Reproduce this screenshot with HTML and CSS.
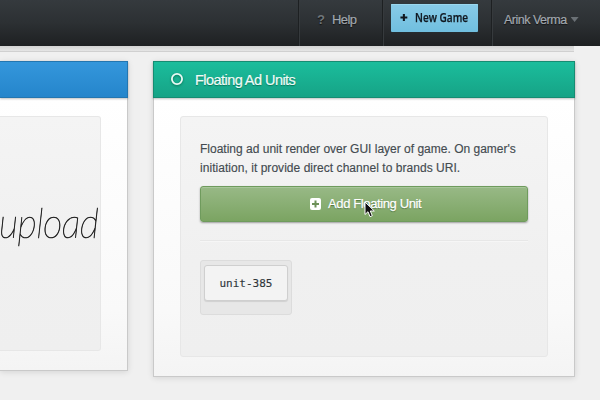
FILE: index.html
```html
<!DOCTYPE html>
<html lang="en">
<head>
<meta charset="utf-8">
<title>Game Dashboard</title>
<link rel="stylesheet" href="styles.css">
</head>
<body>
<header class="topbar">
  <nav class="nav">
    <a class="nav-item help"><span class="question">?</span><span class="help-label">Help</span></a>
    <div class="nav-item action">
      <button class="new-game">
        <svg class="plus" viewBox="0 0 9 9"><path d="M4.5 0.5v8M0.5 4.5h8"/></svg>
        <span class="new-label">New Game</span>
      </button>
    </div>
    <a class="nav-item user"><span class="user-label">Arink Verma</span><i class="caret"></i></a>
  </nav>
</header>
<div class="subline"></div>
<main class="columns">
  <section class="card card-blue">
    <div class="card-head"></div>
    <div class="card-body">
      <div class="well upload-well"><span class="upload">upload</span></div>
    </div>
  </section>
  <section class="card card-green">
    <div class="card-head">
      <svg class="ring" viewBox="0 0 14 14"><circle cx="7" cy="7" r="5.1"/></svg>
      <h2 class="title">Floating Ad Units</h2>
    </div>
    <div class="card-body">
      <div class="well">
        <p class="text"><span class="line-one">Floating ad unit render over GUI layer of game. On gamer's</span><br><span class="line-two">initiation, it provide direct channel to brands URI.</span></p>
        <button class="add">
          <svg class="add-icon" viewBox="0 0 11 12"><rect width="11" height="12" rx="2"/><path d="M5.5 2.5v7M2 6h7"/></svg>
          <span class="add-label">Add Floating Unit</span>
          <svg class="cursor" viewBox="0 0 11 17"><path d="M1 1v12.5l3-2.8 2 5 2.3-1-2-4.7H10.300z"/></svg>
        </button>
        <hr class="rule">
        <div class="unit-box"><div class="unit"><span class="unit-label">unit-385</span></div></div>
      </div>
    </div>
  </section>
</main>
</body>
</html>
```

FILE: styles.css
```css
* { box-sizing: border-box; }
body {
  margin: 0;
  width: 600px;
  height: 400px;
  overflow: hidden;
  background: #f0f0f0;
  font-family: "Liberation Sans", Arial, sans-serif;
  color: #444b50;
}
.topbar {
  height: 46px;
  background: linear-gradient(#353a3e, #2c3033 50%, #1e2022);
}
.nav { display: flex; justify-content: flex-end; height: 46px; }
.nav-item {
  display: flex;
  border-left: 1px solid #1d2022;
  box-shadow: inset 1px 0 #363a3d;
  color: #a2a9b0;
  font-size: 13px;
  line-height: 16px;
  text-shadow: 0 1px 1px #111;
}
.help { width: 84px; padding: 12px 0 0 18px; }
.question { width: 15px; color: #70767b; font-weight: bold; }
.help-label { letter-spacing: -0.6px; -webkit-text-stroke: .2px #a2a9b0; }
.action { width: 109px; padding: 4px 0 0 8px; }
.new-game {
  display: flex;
  align-items: center;
  width: 87px;
  height: 28px;
  padding: 0 0 1px 9px;
  border: 0;
  border-radius: 1px;
  background: linear-gradient(#88cbe8, #70bfdf);
  box-shadow: inset 0 1px #9ad8ef, 0 0 1px #1b4b5c;
  color: #101820;
}
.plus { width: 9px; height: 9px; margin-right: 7px; fill: none; stroke: #101820; stroke-width: 2.4; }
.new-label { font: 600 12px/16px "Open Sans", sans-serif; white-space: nowrap; -webkit-text-stroke: .25px #101820; transform: scaleX(.84); transform-origin: 0 0; }
.user { width: 109px; padding: 12px 0 0 12px; }
.user-label { font-size: 12.5px; letter-spacing: -0.5px; white-space: nowrap; -webkit-text-stroke: .2px #a2a9b0; }
.caret { width: 8px; height: 5px; margin: 5px 0 0 4px; background: #6a7075; clip-path: polygon(0 0, 100% 0, 50% 100%); }
.subline { width: 574px; height: 6px; background: linear-gradient(#d3d3d3, #e5e5e5); border-bottom: 1px solid #d0d0d0; }
.columns { display: flex; align-items: flex-start; gap: 25px; padding-top: 9px; }
.card {
  border: 1px solid #c9c9c9;
  border-top: 0;
  box-shadow: 0 1px 6px rgba(0, 0, 0, .12);
  background: linear-gradient(#fff 37px, #f9f9f9 250px, #f4f4f4);
}
.card-blue { width: 128px; height: 310px; border-left: 0; }
.card-green { width: 422px; height: 316px; }
.card-head {
  display: flex;
  height: 37px;
  margin: 0 -1px;
  padding: 0 0 0 16px;
  border: 1px solid #168c72;
  background: linear-gradient(#1bbd9c, #16a386);
  box-shadow: 0 1px 2px rgba(0, 0, 0, .25);
}
.card-blue .card-head { margin-left: 0; border-color: #2376b0; border-left: 0; background: linear-gradient(#3497dc, #2585cb); }
.ring { width: 14px; height: 14px; margin-top: 10px; fill: none; stroke: #e9faf5; stroke-width: 1.8; filter: drop-shadow(0 1px 1px #087456); }
.title { margin: 9px 0 0 11px; font-size: 14.5px; line-height: 18px; font-weight: 400; letter-spacing: -0.55px; color: #effcf8; text-shadow: 0 1px 1px #087456; -webkit-text-stroke: .2px #effcf8; }
.card-body { padding: 18px 26px 0; }
.well {
  height: 241px;
  padding: 23px 19px 0;
  border: 1px solid #e7e7e7;
  border-radius: 3px;
  background: linear-gradient(#f4f4f4, #f0f0f0 60%, #efefef);
}
.card-blue .card-body { padding-left: 0; }
.upload-well { height: 235px; padding: 82px 0 0; border-left: 0; border-radius: 0 3px 3px 0; }
.upload { display: inline-block; margin-left: -1px; font: italic 100 38px/50px Lato, sans-serif; letter-spacing: -0.6px; color: #222; -webkit-text-stroke: .6px #222; transform: scaleY(1.1); transform-origin: 0 48px; }
.text { margin: 0; font-size: 12px; line-height: 19px; white-space: nowrap; -webkit-text-stroke: .15px #444b50; }
.line-two { letter-spacing: 0.04px; }
.add {
  position: relative;
  display: flex;
  width: 328px;
  height: 36px;
  margin: 8px 0 0;
  padding: 0 0 0 109px;
  border: 1px solid #6f9b5d;
  border-radius: 3px;
  background: linear-gradient(#98b986, #7ba462);
  box-shadow: inset 0 1px #a8c79a, 0 1px 2px rgba(0, 0, 0, .35);
}
.add-icon { width: 11px; height: 12px; margin: 11px 7px 0 0; fill: #fff; }
.add-icon path { stroke: #6d9158; stroke-width: 2; }
.add-label { margin-top: 9px; font: 13px/16px "Liberation Sans", sans-serif; letter-spacing: -0.38px; color: #fff; white-space: nowrap; -webkit-text-stroke: .25px #fff; text-shadow: 0 1px 1px #4c703a; }
.cursor { position: absolute; left: 163px; top: 14px; width: 11px; height: 17px; fill: #111; stroke: #fff; stroke-width: 1; }
.rule { height: 2px; margin: 18px 0 18px; border: 0; border-top: 1px solid #e7e7e7; background: #f6f6f6; width: 328px; }
.unit-box { width: 92px; height: 55px; padding: 4px 3px; border: 1px solid #dcdcdc; border-radius: 3px; background: #e7e7e7; }
.unit { width: 84px; height: 36px; text-align: center; border: 1px solid #cfcfcf; border-radius: 3px; background: #f3f3f3; box-shadow: 0 1px 1px #d0d0d0; }
.unit-label { font: 11px/35px "DejaVu Sans Mono", monospace; color: #30373b; -webkit-text-stroke: .15px #30373b; }
```
